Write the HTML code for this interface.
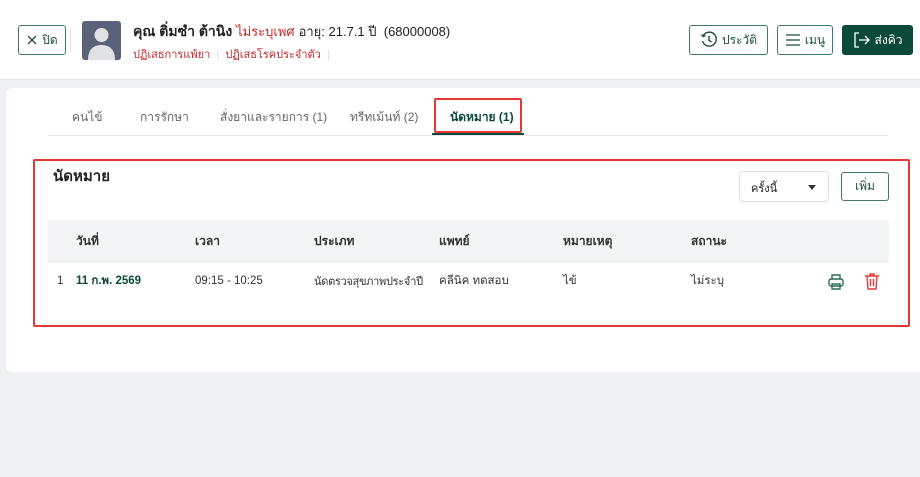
<!DOCTYPE html>
<html><head><meta charset="utf-8"><style>
*{box-sizing:border-box;margin:0;padding:0}
body{width:920px;height:477px;background:#eef0f3;font-family:"Liberation Sans",sans-serif;color:#222;position:relative;overflow:hidden;font-size:12px}
.abs{position:absolute}
.hdr{left:0;top:0;width:920px;height:80px;background:#fff;border-bottom:1px solid #e2e4e8}
.btn{position:absolute;border:1px solid #3f7a6a;border-radius:3px;background:#fff;color:#1f4d40;display:flex;align-items:center;justify-content:center;gap:4px;font-size:12px}
.card{left:6px;top:88px;width:930px;height:284px;background:#fff;border-radius:6px}
.tab{position:absolute;top:108px;font-size:12px;color:#666;white-space:nowrap}
.th{position:absolute;top:232px;font-size:12px;font-weight:bold;color:#333;white-space:nowrap}
.td{position:absolute;top:272px;font-size:11.5px;color:#333;white-space:nowrap}
.lt{top:275px}
</style></head><body>
<div class="abs hdr"></div>
<div class="btn" style="left:18px;top:25px;width:48px;height:30px">
<svg width="12" height="12" viewBox="0 0 12 12"><path d="M2 2L10 10M10 2L2 10" stroke="#1f4d40" stroke-width="1.3"/></svg>ปิด</div>
<div class="abs" style="left:70px;top:28px;width:1px;height:24px;background:#e3e3e3"></div>
<div class="abs" style="left:82px;top:21px;width:39px;height:39px;background:#5a6179;border-radius:3px;overflow:hidden">
<svg width="39" height="39" viewBox="0 0 39 39"><circle cx="19.5" cy="14" r="7" fill="#e0e2e6"/><path d="M6 39C6 28 12 24 19.5 24S33 28 33 39Z" fill="#e0e2e6"/></svg></div>
<div class="abs" style="left:133px;top:21px;font-size:14px;white-space:nowrap"><b>คุณ ติ่มซำ ต้านิง</b> <span style="color:#c62828;font-size:13px">ไม่ระบุเพศ</span> <span style="font-size:13px">อายุ: 21.7.1 ปี &nbsp;(68000008)</span></div>
<div class="abs" style="left:133px;top:45px;font-size:11px;color:#c62828;white-space:nowrap">ปฏิเสธการแพ้ยา <span style="color:#ddd">&nbsp;|&nbsp;</span> ปฏิเสธโรคประจำตัว <span style="color:#ddd">&nbsp;|</span></div>
<div class="btn" style="left:689px;top:25px;width:79px;height:30px"><svg width="18" height="18" viewBox="0 0 18 18" fill="none" stroke="#1f4d40" stroke-width="1.4"><path d="M3 5A7 7 0 1 1 2.5 10"/><path d="M1.5 3.5L3 5.5L5.5 4.5"/><path d="M9 5V9.5L11.5 11"/></svg>ประวัติ</div>
<div class="btn" style="left:777px;top:25px;width:56px;height:30px"><svg width="16" height="14" viewBox="0 0 16 14" stroke="#1f4d40" stroke-width="1.3"><path d="M1 2H15M1 7H15M1 12H15"/></svg>เมนู</div>
<div class="btn" style="left:842px;top:25px;width:71px;height:30px;background:#0b4a3a;border-color:#0b4a3a;color:#fff"><svg width="18" height="16" viewBox="0 0 18 16" fill="none" stroke="#fff" stroke-width="1.3"><path d="M6 1H2V15H6"/><path d="M6 8H16M12 4L16 8L12 12"/></svg>ส่งคิว</div>
<div class="abs card"></div>
<div class="tab" style="left:72px">คนไข้</div>
<div class="tab" style="left:140px">การรักษา</div>
<div class="tab" style="left:220px">สั่งยาและรายการ (1)</div>
<div class="tab" style="left:350px">ทรีทเม้นท์ (2)</div>
<div class="tab" style="left:450px;color:#0b4a3a;font-weight:bold">นัดหมาย (1)</div>
<div class="abs" style="left:48px;top:135px;width:840px;height:1px;background:#e8e8e8"></div>
<div class="abs" style="left:432px;top:133px;width:92px;height:2px;background:#0b4a3a"></div>
<div class="abs" style="left:434px;top:98px;width:88px;height:35px;border:2px solid #e53935;border-radius:2px"></div>
<div class="abs" style="left:33px;top:159px;width:877px;height:168px;border:2px solid #e53935;border-radius:2px"></div>
<div class="abs" style="left:53px;top:164px;font-size:15px;font-weight:bold">นัดหมาย</div>
<div class="abs" style="left:739px;top:171px;width:90px;height:31px;border:1px solid #ddd;border-radius:4px;font-size:11px;padding:7px 0 0 11px">ครั้งนี้<svg class="abs" style="left:68px;top:13px" width="8" height="5" viewBox="0 0 8 5"><path d="M0 0H8L4 5Z" fill="#333"/></svg></div>
<div class="btn" style="left:841px;top:172px;width:48px;height:29px">เพิ่ม</div>
<div class="abs" style="left:48px;top:220px;width:841px;height:42px;background:#f3f4f6;border-bottom:1px solid #e5e7eb"></div>
<div class="th" style="left:76px">วันที่</div>
<div class="th" style="left:195px">เวลา</div>
<div class="th" style="left:314px">ประเภท</div>
<div class="th" style="left:439px">แพทย์</div>
<div class="th" style="left:563px">หมายเหตุ</div>
<div class="th" style="left:691px">สถานะ</div>
<div class="td lt" style="left:57px">1</div>
<div class="td" style="left:76px;color:#0b4a3a;font-weight:bold">11 ก.พ. 2569</div>
<div class="td lt" style="left:195px">09:15 - 10:25</div>
<div class="td" style="left:314px;font-size:11px;letter-spacing:-0.3px">นัดตรวจสุขภาพประจำปี</div>
<div class="td" style="left:439px">คลีนิค ทดสอบ</div>
<div class="td" style="left:563px">ไข้</div>
<div class="td" style="left:691px">ไม่ระบุ</div>
<svg class="abs" style="left:827px;top:273px" width="18" height="18" viewBox="0 0 18 18" fill="none" stroke="#2e6b57" stroke-width="1.4"><path d="M5 6V2H13V6"/><rect x="2" y="6" width="14" height="7" rx="2"/><path d="M5 11H13V16H5Z"/></svg>
<svg class="abs" style="left:864px;top:272px" width="16" height="18" viewBox="0 0 16 18" fill="none" stroke="#e53935" stroke-width="1.4"><path d="M1 4H15M6 4V2H10V4"/><path d="M3 4L4 17H12L13 4"/><path d="M6.5 7V14M9.5 7V14"/></svg>
</body></html>
